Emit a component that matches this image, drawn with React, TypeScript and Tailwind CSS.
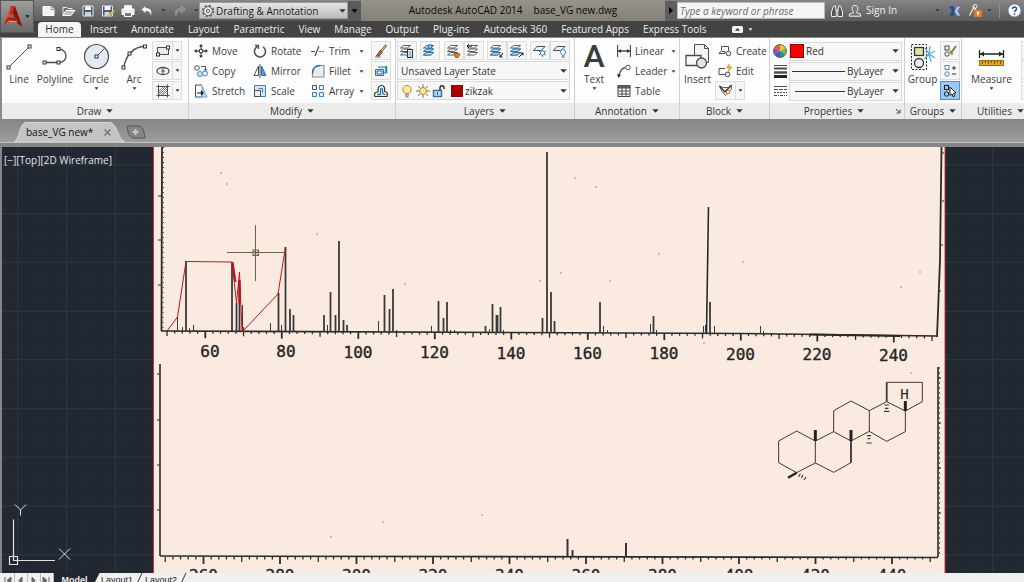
import React from "react";

type IconProps = { w?: number; h?: number; className?: string; children: React.ReactNode };

function Ico({ w = 16, h = 16, className = "", children }: IconProps) {
  return (
    <svg
      width={w}
      height={h}
      viewBox={`0 0 ${w} ${h}`}
      className={`shrink-0 ${className}`}
      fill="none"
      stroke="#4a4d52"
      strokeWidth="1"
      aria-hidden="true"
    >
      {children}
    </svg>
  );
}

function Caret({ className = "text-[#333]", small = false }: { className?: string; small?: boolean }) {
  return small ? (
    <svg width="5" height="3" viewBox="0 0 5 3" className={`shrink-0 ${className}`} aria-hidden="true">
      <path d="M0.5 0.3h4L2.5 2.8z" fill="currentColor" />
    </svg>
  ) : (
    <svg width="7" height="4" viewBox="0 0 7 4" className={`shrink-0 ${className}`} aria-hidden="true">
      <path d="M0.3 0.2h6.4L3.5 3.8z" fill="currentColor" />
    </svg>
  );
}

/* ---------- Quick access icons ---------- */

const quickIcons: { name: string; icon: React.ReactNode }[] = [
  { name: "New", icon: <Ico><path d="M2 3.5h8l3 3v6H2z" fill="#f3f3f3" stroke="#fff" /><path d="M10 3.5v3h3" stroke="#999" /></Ico> },
  { name: "Open", icon: <Ico><path d="M2 12.5v-8h4l1 1h4v2" stroke="#e8e8e8" /><path d="M2 12.5l3-5h9l-4 5z" fill="#b9c0c8" stroke="#fff" /></Ico> },
  { name: "Save", icon: <Ico><path d="M3 3h10v10H3z" fill="#4a5a78" stroke="#dfe5ee" /><path d="M5 3h6v4H5z" fill="#f4f4f4" stroke="none" /><path d="M5 9h6v4H5z" fill="#cfd5dd" stroke="none" /></Ico> },
  { name: "Save as", icon: <Ico><path d="M2.5 3h10v10h-10z" fill="#4a5a78" stroke="#dfe5ee" /><path d="M4.500 3h6v4h-6z" fill="#f4f4f4" stroke="none" /><path d="M4.500 9h5v4h-5z" fill="#cfd5dd" stroke="none" /><path d="M8 13l6-5" stroke="#e9b64a" strokeWidth="2.200" /></Ico> },
  { name: "Plot", icon: <Ico><path d="M4.500 6V2.500h7V6" fill="#fff" stroke="#eee" /><path d="M2 6h12v5.500H2z" fill="#e9e9e9" stroke="#fff" /><path d="M4.500 9.500h7v4h-7z" fill="#777" stroke="#fff" /></Ico> },
  { name: "Undo", icon: <Ico><path d="M6.500 3L2.500 6.500l4 3.500V8c3-.5 4.500.5 5.500 4.500 1.500-5-1-7.500-5.500-7.500z" fill="#f2f2f2" stroke="none" /></Ico> },
  { name: "Redo", icon: <Ico><path d="M9.500 3l4 3.500-4 3.500V8c-3-.5-4.500.5-5.500 4.500C2.500 7.500 5 5 9.500 5z" fill="#8c8c8c" stroke="#a4a4a4" strokeWidth=".6" /></Ico> },
];

function Gear() {
  return (
    <Ico w={14} h={14}>
      <circle cx="7" cy="7" r="5.200" stroke="#666" strokeWidth="2" strokeDasharray="2.300 1.780" />
      <circle cx="7" cy="7" r="4.300" stroke="#666" fill="#f1f1f1" />
      <circle cx="7" cy="7" r="1.700" stroke="#666" fill="#d8d8d8" />
    </Ico>
  );
}

function TitleBar() {
  return (
    <div className="flex h-[21px] items-center bg-linear-to-b from-[#858585] to-[#5c5c5c]">
      <div className="flex w-[165px] shrink-0 items-center pl-[5px]">
        {quickIcons.map((q, i) => (
          <React.Fragment key={q.name}>
            <button type="button" aria-label={q.name} className="flex w-5 justify-center">
              {q.icon}
            </button>
            {i === 5 && <Caret small className="mx-1 text-[#333]" />}
          </React.Fragment>
        ))}
        <Caret small className="ml-1 text-[#333]" />
      </div>
      <div className="relative h-[17px] w-[149px] shrink-0">
        <select
          aria-label="Workspace"
          className="block h-full w-full appearance-none border border-[#9b9b9b] bg-linear-to-b from-[#e6e6e6] to-[#bcbcbc] pl-[16px] text-[10px] leading-[14px] text-[#1c1c1c]"
        >
          <option>Drafting &amp; Annotation</option>
        </select>
        <span className="pointer-events-none absolute inset-0 flex items-center justify-between pl-[2px] pr-[2px]">
          <Gear />
          <Caret />
        </span>
      </div>
      <button type="button" aria-label="Customize quick access" className="flex h-[19px] w-[13px] shrink-0 items-center justify-center bg-[#5a5a5a]">
        <Caret className="text-black" />
      </button>
      <div className="flex h-full min-w-0 flex-1 items-center justify-center gap-[11px] bg-linear-to-b from-[#96938b] to-[#858179] text-[10px] whitespace-pre text-[#080808]">
        <span>Autodesk AutoCAD 2014</span>
        <span>base_VG new.dwg</span>
      </div>
      <button type="button" aria-label="Expand search" className="flex h-[19px] w-[12px] shrink-0 items-center justify-center bg-[#5e5e5e]">
        <svg width="4" height="7" viewBox="0 0 4 7" aria-hidden="true"><path d="M0 0l4 3.500-4 3.500z" fill="#000" /></svg>
      </button>
      <input
        aria-label="Search"
        placeholder="Type a keyword or phrase"
        className="h-[17px] w-[148px] shrink-0 border border-[#bbb] bg-[#f4f4f4] px-[2px] text-[10px] italic placeholder:text-[#6d6d6d]"
      />
      <div className="flex w-[199px] shrink-0 items-center pl-[5px] text-[10px] text-[#f0f0f0]">
        <button type="button" aria-label="Find" className="mr-[4px]">
          <Ico w={14} h={14}><path d="M3.500 2h2v2l.7 1.500v7H1.500V8zM10.500 2h-2v2L7.800 5.500v7h4.700V8z" fill="#555" stroke="#eee" /><path d="M5.500 6h3" stroke="#eee" /></Ico>
        </button>
        <button type="button" className="flex items-center gap-[4px]">
          <Ico w={14} h={14}><path d="M7 1.500c4 0 3.200 5 1.700 6v1.200l4 1.500v2H1.300v-2l4-1.500V7.500C3.800 6.500 3 1.500 7 1.500z" fill="#777" stroke="#f2f2f2" /></Ico>
          Sign In
        </button>
        <Caret small className="ml-auto text-[#333]" />
        <button type="button" aria-label="Exchange apps" className="ml-[8px]">
          <Ico w={14} h={14}><path d="M1 2h4l3 4v2l-3 4H1l3-5z" fill="#2b4f86" stroke="none" /><path d="M13 2H9L6.500 6v2L9 12h4l-3-5z" fill="#a9c4ea" stroke="#2b4f86" strokeWidth=".5" /></Ico>
        </button>
        <button type="button" aria-label="Stay connected" className="ml-[6px] mr-[4px] flex">
          <Ico w={15} h={15}><path d="M1.500 12.500L6 4l3 5" stroke="#ececec" strokeWidth="1.200" /><circle cx="7" cy="3.500" r="2" stroke="#ececec" /><rect x="6" y="7" width="8" height="7" fill="#e0782b" stroke="none" /><circle cx="10" cy="9.700" r="1.300" fill="#fff" stroke="none" /><path d="M10 10v2.500" stroke="#fff" /></Ico>
        </button>
        <Caret small />
        <span className="ml-[7px] mr-[7px] h-[15px] w-px bg-[#8f8f8f]" />
        <button type="button" aria-label="Help" className="mr-[2px]">
          <Ico w={15} h={15}><circle cx="7.500" cy="7.500" r="6.500" fill="#fff" stroke="#6f87b5" /><path d="M5.500 6c0-3 4.200-2.500 4 0-.1 1.300-1.900 1.300-1.900 3M7.600 10.200v1.600" stroke="#2a4f96" strokeWidth="1.600" /></Ico>
        </button>
      </div>
    </div>
  );
}

const ribbonTabs = ["Insert", "Annotate", "Layout", "Parametric", "View", "Manage", "Output", "Plug-ins", "Autodesk 360", "Featured Apps", "Express Tools"];

function Header() {
  return (
    <header className="flex shrink-0 bg-[#434343]">
      <div className="w-[34px] shrink-0">
        <button type="button" aria-label="Application menu" className="flex h-[33px] w-full items-center border border-[#555] bg-linear-to-b from-[#9d9d9d] to-[#6b6b6b]">
          <svg width="24" height="26" viewBox="0 0 24 26" className="shrink-0" aria-hidden="true">
            <path d="M10 2h4l-2.500 9L9 15 3 20z" fill="#e24a35" />
            <path d="M14 2l7.500 21-6-4L11 9z" fill="#8c1109" />
            <path d="M10 2h4l-3 8-2 1z" fill="#c72a1b" />
            <path d="M2 21.500l5-8 8-.5 2.500 4L10 17.500z" fill="#b01a10" />
            <path d="M2 21.500l6-5 7.500.500L17 18.500l-9-.5z" fill="#f08070" />
            <path d="M11.500 8.500l2.300 5-4 .5z" fill="#6b6b6b" />
          </svg>
          <Caret small className="text-[#111]" />
        </button>
      </div>
      <div className="min-w-0 flex-1">
        <TitleBar />
        <nav className="flex h-[16px] items-end text-[10px] leading-4 text-[#ececec]">
          <button type="button" className="ml-[4px] mr-[9px] h-[15px] w-[43px] shrink-0 rounded-t-sm bg-[#f5f5f5] leading-[15px] text-[#2c2c2c]">Home</button>
          <div className="flex min-w-0 items-center gap-[14px]">
            {ribbonTabs.map((t) => (
              <button key={t} type="button" className="shrink-0 whitespace-nowrap">{t}</button>
            ))}
            <button type="button" aria-label="Minimize ribbon" className="ml-[11px] flex h-4 items-center gap-[5px]">
              <svg width="11" height="7" viewBox="0 0 11 7" aria-hidden="true"><rect width="11" height="7" rx="1.500" fill="#f2f2f2" /><path d="M3 4.800h5L5.500 2z" fill="#333" /></svg>
              <Caret small className="text-[#eee]" />
            </button>
          </div>
        </nav>
      </div>
    </header>
  );
}

/* ---------- Ribbon ---------- */

function Panel({ title, width, launcher, children }: { title: string; width: string; launcher?: boolean; children: React.ReactNode }) {
  return (
    <section className={`flex flex-col border-r border-[#cfcfcf] ${width}`}>
      <div className="h-[65px] bg-[#fdfdfd] pt-[3px]">{children}</div>
      <button type="button" className="flex h-[16px] items-center bg-[#ebebeb] px-[3px] text-[10px] leading-4 text-[#333]">
        <span className="flex flex-1 items-center justify-center gap-[5px]">
          {title}
          <Caret />
        </span>
        {launcher && (
          <svg width="6" height="6" viewBox="0 0 6 6" aria-hidden="true"><path d="M1 1l3.500 3.500M5 1.500V5H1.500" stroke="#444" fill="none" /></svg>
        )}
      </button>
    </section>
  );
}

function BigTool({ label, width, caret, children }: { label: string; width: string; caret?: boolean; children: React.ReactNode }) {
  return (
    <button type="button" className={`flex h-[60px] shrink-0 flex-col items-center text-[10px] leading-4 text-[#3c3c3c] ${width}`}>
      <span className="flex h-[30px] items-center">{children}</span>
      {label}
      {caret && <Caret small />}
    </button>
  );
}

function Tool({ label, icon, caret }: { label: string; icon: React.ReactNode; caret?: boolean }) {
  return (
    <button type="button" className="flex h-5 items-center gap-[4px] text-[10px] leading-4 text-[#3c3c3c]">
      {icon}
      {label}
      {caret && <Caret small className="mr-[7px] ml-auto" />}
    </button>
  );
}

function Boxed({ name, active, split, children }: { name: string; active?: boolean; split?: boolean; children: React.ReactNode }) {
  return (
    <button
      type="button"
      aria-label={name}
      className={`flex h-[19px] items-center justify-center border ${split ? "w-[30px]" : "w-[20px]"} ${active ? "border-[#4a8fd0] bg-[#9bc8f0]" : "border-[#dcdcdc] bg-[#f6f6f6]"}`}
    >
      <span className="flex flex-1 justify-center">{children}</span>
      {split && (
        <span className="flex h-full w-[9px] items-center justify-center border-l border-[#dcdcdc]">
          <Caret small />
        </span>
      )}
    </button>
  );
}

const node = (x: number, y: number) => <rect x={x - 1.5} y={y - 1.5} width="3" height="3" fill="#fff" stroke="#333" />;

function DrawPanel() {
  return (
    <Panel title="Draw" width="w-[187px] shrink-0">
      <div className="flex">
        <BigTool label="Line" width="w-[34px]">
          <Ico w={27} h={27}><path d="M2.500 24.500l21-21" />{node(2.5, 24.5)}{node(23.5, 3.5)}</Ico>
        </BigTool>
        <BigTool label="Polyline" width="w-[38px]">
          <Ico w={27} h={27}><path d="M2.500 19.500h14c10 0 10-13 0-13.500" strokeWidth="1.300" />{node(2.5, 19.5)}{node(16.5, 19.5)}{node(16.5, 6)}</Ico>
        </BigTool>
        <BigTool label="Circle" width="w-[44px]" caret>
          <Ico w={27} h={27}><circle cx="13.500" cy="13.500" r="12" fill="#e2eaf3" strokeWidth="1.200" /><path d="M13.500 13.500l8-8" />{node(13.5, 13.5)}</Ico>
        </BigTool>
        <BigTool label="Arc" width="w-[32px]" caret>
          <Ico w={27} h={27}><path d="M2.500 25C5 12 12 4 24.500 3" strokeWidth="1.300" />{node(2.5, 24.5)}{node(8.5, 10.5)}{node(24, 3.5)}</Ico>
        </BigTool>
        <div className="flex flex-col gap-px pl-[2px]">
          <Boxed name="Rectangle" split>
            <Ico><rect x="2.500" y="4.500" width="11" height="7" fill="#e6eaf0" />{node(3, 11.5)}{node(13, 4.5)}</Ico>
          </Boxed>
          <Boxed name="Ellipse" split>
            <Ico><ellipse cx="8" cy="8" rx="6" ry="3.500" strokeWidth="1.300" /><path d="M8 5v6M6 8h4" /></Ico>
          </Boxed>
          <Boxed name="Hatch" split>
            <Ico><path d="M3.500 1.500v13M12.500 1.500v13M1.500 3.500h13M1.500 12.500h13" /><path d="M4 8l4-4M4 12l8-8M8 12l4-4M4 10l6-6M6 12l6-6" strokeWidth=".7" /></Ico>
          </Boxed>
        </div>
      </div>
    </Panel>
  );
}

function ModifyPanel() {
  return (
    <Panel title="Modify" width="w-[207px] shrink-0">
      <div className="grid grid-cols-[59px_58px_60px_20px] grid-rows-[20px_20px_20px] pl-[5px]">
        <Tool label="Move" icon={<Ico w={14} h={14}><path d="M7 1v12M1 7h12" strokeWidth="1.300" /><path d="M7 0l2 2.500H5zM7 14l2-2.500H5zM0 7l2.500-2v4zM14 7l-2.500-2v4z" fill="#333" stroke="none" /><rect x="5.500" y="5.500" width="3" height="3" fill="#fff" /></Ico>} />
        <Tool label="Rotate" icon={<Ico w={14} h={14}><path d="M4.500 2.500a5.500 5.500 0 1 0 5.500.3" strokeWidth="1.500" /><path d="M2 1.500h3.500v3.500" strokeWidth="1.300" /></Ico>} />
        <Tool caret label="Trim" icon={<Ico w={14} h={14}><path d="M0 7.500h4M4 12l4-10" strokeWidth="1.200" /><path d="M8 7.500h6" stroke="#2e86c9" strokeDasharray="2 1" /></Ico>} />
        <Boxed name="Erase"><Ico><path d="M13.500 2l-6 7" stroke="#8a6a3a" strokeWidth="2.500" /><path d="M13.500 2l-6 7" stroke="#e8c98c" strokeWidth=".8" /><path d="M7 7.500l2.500 2L6 13H3.500z" fill="#c07850" stroke="#6c3a23" /><path d="M2 14h6" stroke="#8c6a50" /></Ico></Boxed>
        <Tool label="Copy" icon={<Ico w={14} h={14}><circle cx="3" cy="4" r="2.300" /><path d="M7 2.500h4.500v4" /><circle cx="6" cy="10" r="2.500" stroke="#2e86c9" fill="#cfe6f7" /><circle cx="11" cy="9.500" r="2.500" stroke="#2e86c9" fill="#fff" /><path d="M9.800 5l1.700 2 1.700-2" stroke="#2e86c9" /></Ico>} />
        <Tool label="Mirror" icon={<Ico w={14} h={14}><path d="M5.500 2v9.500H1z" /><path d="M8.500 2v9.500H13z" fill="#5b9bd0" stroke="#2e6fa8" /><path d="M7 0v14" /></Ico>} />
        <Tool caret label="Fillet" icon={<Ico w={14} h={14}><path d="M1.500 13V9.500c0-5 3-8 8-8H13V13z" fill="#e9eef4" stroke="#8a9099" strokeWidth="1.200" /><path d="M1.500 9.500c0-5 3-8 8-8" stroke="#2e6fa8" strokeWidth="1.300" /></Ico>} />
        <Boxed name="Explode"><Ico><path d="M2.500 6.500h8v6h-8zM5 4h8v6h-2.500" stroke="#2479b5" fill="#cfe6f7" /><path d="M4 8h5v3H4z" fill="#e9f5ff" stroke="#2479b5" /><path d="M13.500 3v7" stroke="#2479b5" strokeWidth="1.500" /></Ico></Boxed>
        <Tool label="Stretch" icon={<Ico w={14} h={14}><path d="M8 1H1.500v12H8M1.500 1v12" /><path d="M8 2l5 11H8z" fill="#bcdcf3" stroke="#6aa6d4" /><path d="M3 9h6M7 7l2 2-2 2" stroke="#111" strokeWidth="1.200" /></Ico>} />
        <Tool label="Scale" icon={<Ico w={14} h={14}><path d="M1.500 1.500h11v11h-11z" fill="#d3e8f8" stroke="#2e86c9" /><path d="M1.500 6.500h6v6h-6z" fill="#eee" /><path d="M5.500 4.500h4v4" stroke="#2e86c9" /></Ico>} />
        <Tool caret label="Array" icon={<Ico w={14} h={14}><path d="M1.500 1.500h4v4h-4z" /><path d="M8.500 1.500h4v4h-4zM1.500 8.500h4v4h-4zM8.500 8.500h4v4h-4z" stroke="#2e86c9" fill="#e6f3fc" /></Ico>} />
        <Boxed name="Offset"><Ico><path d="M2 13.500c-1.500-3 0-4.500 3-4.500 0-4 .5-6.500 3.500-6.500s3.500 2.500 3 6c2.500 0 3.500 2 2.500 5z" stroke="#333" strokeWidth="1.200" /><path d="M4 11.500h3.500V7c0-2 2-2 2 0v2c0 1.500 1 2.500 3 2.500" stroke="#2479b5" strokeWidth="1.300" /></Ico></Boxed>
      </div>
    </Panel>
  );
}

function Sheets({ accent }: { accent?: React.ReactNode }) {
  return (
    <Ico>
      <path d="M4.500 2.500h7l-3 2.500h-7zM4.500 6h7l-3 2.500h-7zM4.500 9.500h7l-3 2.500h-7z" fill="#fff" strokeWidth=".9" />
      {accent}
    </Ico>
  );
}

const blueSheets = <path d="M4.500 6h7l-3 2.500h-7zM4.500 9.500h7l-3 2.500h-7z" fill="#b7daf4" stroke="#236fa8" strokeWidth=".9" />;

function LayersPanel() {
  return (
    <Panel title="Layers" width="w-[179px] shrink-0">
      <div className="flex h-5 justify-between pr-[4px] pl-px">
        <Boxed name="Layer properties"><Sheets accent={<><rect x="8.500" y="6.500" width="5" height="8" fill="#fff" stroke="#333" /><path d="M9.500 9h3M9.500 11h3M9.500 13h3" stroke="#2e86c9" /></>} /></Boxed>
        <Boxed name="Make current"><Sheets accent={<>{blueSheets}<circle cx="8" cy="3.500" r="2" fill="#8cc1ea" stroke="#236fa8" /></>} /></Boxed>
        <div className="flex">
          <Boxed name="Match layer"><Sheets accent={<path d="M8 10l6 1-2 3.500H9.500z" fill="#d6843a" stroke="#a35414" />} /></Boxed>
          <Boxed name="Previous layer"><Sheets accent={<path d="M1 3h5M3 1L1 3l2 2" stroke="#111" />} /></Boxed>
        </div>
        <div className="flex">
          <Boxed name="Isolate"><Sheets accent={<>{blueSheets}<path d="M14 10l-3 4M11 11.500V14h2.500" stroke="#111" /></>} /></Boxed>
          <Boxed name="Unisolate"><Sheets accent={<>{blueSheets}<path d="M10 14l4-4M11.500 10H14v2.500" stroke="#111" /></>} /></Boxed>
        </div>
        <div className="flex">
          <Boxed name="Freeze"><Ico><path d="M5 3.500h8l-4 4H1.500z" /><path d="M10.500 6v8M7 8l7 4M14 8l-7 4" stroke="#2e86c9" /><circle cx="10.500" cy="10" r="2.200" fill="#fff" stroke="#2e86c9" /></Ico></Boxed>
          <Boxed name="Layer off"><Ico><path d="M5 3.500h8l-4 4H1.500z" /><path d="M10.500 12.500c-3.500-4-1.500-6 .5-6s4 2 1 6z" fill="#e8f3fb" stroke="#2e86c9" /><path d="M10 14h2.500" stroke="#333" /></Ico></Boxed>
        </div>
      </div>
      <div className="flex flex-col gap-px pr-[4px] pl-px">
        <div className="relative">
          <select aria-label="Layer state" className="block h-[19px] w-full appearance-none border border-[#d9d9d9] bg-[#f7f7f7] pl-[3px] text-[10px] leading-4 text-[#333]">
            <option>Unsaved Layer State</option>
          </select>
          <span className="pointer-events-none absolute inset-y-0 right-[3px] flex items-center"><Caret /></span>
        </div>
        <div className="relative">
          <select aria-label="Layer" className="block h-[19px] w-full appearance-none border border-[#d9d9d9] bg-[#f7f7f7] pl-[67px] text-[10px] leading-4 text-[#333]">
            <option>zikzak</option>
          </select>
          <span className="pointer-events-none absolute inset-0 flex items-center gap-[2px] pr-[3px] pl-[3px]">
            <Ico w={14} h={14}><path d="M5 9.500C1 6 3 1.500 7 1.500s6 4.500 2 8z" fill="#fbe9a4" stroke="#b58e30" /><path d="M5 11h4M5.500 12.800h3" stroke="#666" /></Ico>
            <Ico w={14} h={14}><path d="M7 0v14M0 7h14M2 2l10 10M12 2L2 12" stroke="#777" /><circle cx="7" cy="7" r="3.500" fill="#fbe9a4" stroke="#b58e30" /></Ico>
            <Ico w={14} h={14}><path d="M8 7V4c0-3 4-3 4 0v1" stroke="#333" strokeWidth="1.500" /><rect x="1.500" y="6.500" width="8" height="6" fill="#b8dcf5" stroke="#2e6fa8" strokeWidth="1.400" /><path d="M5.500 8.500v2" stroke="#111" /></Ico>
            <span className="ml-[3px] size-[12px] border border-[#7a1010] bg-[#a80000]" />
            <Caret className="ml-auto text-[#333]" />
          </span>
        </div>
      </div>
    </Panel>
  );
}

function AnnotationPanel() {
  return (
    <Panel title="Annotation" width="w-[105px] shrink-0">
      <div className="flex">
        <BigTool label="Text" width="w-[38px]" caret>
          <span className="font-['Roboto'] text-[32px] leading-[30px] font-medium">A</span>
        </BigTool>
        <div className="flex flex-1 flex-col pl-[4px] [&>button]:w-full">
          <Tool caret label="Linear" icon={<Ico w={14} h={14}><path d="M.5 1v12M13.500 1v12M1 7h12" strokeWidth="1.300" /><path d="M1 7l3-2v4zM13 7l-3-2v4z" fill="#333" stroke="none" /></Ico>} />
          <Tool caret label="Leader" icon={<Ico w={14} h={14}><path d="M1.500 13C3 8 4 4.500 8 3.500" strokeWidth="1.300" /><circle cx="11" cy="3.500" r="2.300" /><path d="M0 10l1.500 4L4 11z" fill="#333" stroke="none" /></Ico>} />
          <Tool label="Table" icon={<Ico w={14} h={14}><path d="M1 1.500h12v11H1z" fill="#fff" /><path d="M1 1.500h12v2.500H1z" fill="#666" /><path d="M1 7h12M1 10h12M5 4v9M9 4v9" /></Ico>} />
        </div>
      </div>
    </Panel>
  );
}

function BlockPanel() {
  return (
    <Panel title="Block" width="w-[90px] shrink-0">
      <div className="flex">
        <BigTool label="Insert" width="w-[35px]">
          <Ico w={27} h={27}><path d="M10.500 1.500h10l4 4v14h-14z" fill="#f3f3f3" /><path d="M20.500 1.500v4h4" /><path d="M2 12.500h15v10H2z" fill="#f7f7f7" strokeWidth="1.300" /><circle cx="17.500" cy="20" r="5" fill="#e4e4e4" strokeWidth="1.300" /></Ico>
        </BigTool>
        <div className="flex flex-col items-start">
          <div className="pl-[3px]">
            <Tool label="Create" icon={<Ico w={14} h={14}><path d="M3.500 2.500h7v5M1 9.500h6V7.500l-3 0" /><path d="M3.500 2.500v4L1 9.500" /><circle cx="10.500" cy="9.500" r="2.300" fill="#eee" /></Ico>} />
            <Tool label="Edit" icon={<Ico w={14} h={14}><path d="M1 4.500h6M1 4.500v6h7" /><circle cx="9.500" cy="10.500" r="2.300" fill="#eee" /><path d="M11.500 0l-3 4h3l-1.500 4 4-5h-3z" fill="#f0b429" stroke="#c98a10" strokeWidth=".6" /></Ico>} />
          </div>
          <Boxed name="Edit attributes" split><Ico><path d="M1.500 3l3 1.500h6l3-2.500v4l-6 6.500-3.500-4z" fill="#f7f1e4" strokeWidth=".9" /><path d="M1.500 3l5.500 6 6-6.500" stroke="#333" strokeWidth="1.300" /><circle cx="10" cy="9" r="1.700" stroke="#c9762a" fill="#fff" /></Ico></Boxed>
        </div>
      </div>
    </Panel>
  );
}

function PropRow({ icon, label, value, swatch, start }: { icon: React.ReactNode; label: string; value: string; swatch?: boolean; start?: string }) {
  return (
    <div className="flex h-5 items-center gap-[2px]">
      {icon}
      <div className="relative h-[19px] flex-1">
        <select
          aria-label={label}
          className={`block h-full w-full appearance-none border border-[#d9d9d9] bg-[#f7f7f7] text-[10px] leading-4 text-[#333] ${swatch ? "pl-[16px]" : "pl-[57px]"}`}
        >
          <option>{value}</option>
        </select>
        <span className="pointer-events-none absolute inset-0 flex items-center justify-between pr-[3px]">
          {swatch ? <span className="ml-px size-[14px] border border-[#701010] bg-[#fb0000]" /> : <span className={`mr-auto h-px bg-[#333] ${start}`} />}
          <Caret />
        </span>
      </div>
    </div>
  );
}

function PropertiesPanel() {
  return (
    <Panel title="Properties" width="w-[135px] shrink-0" launcher>
      <div className="pr-[2px] pl-[3px]">
        <PropRow
          swatch
          label="Color"
          value="Red"
          icon={<Ico w={14} h={14}><g stroke="none"><path d="M7 7V.5A6.500 6.500 0 0 1 12.600 3.700z" fill="#e8c93a" /><path d="M7 7l5.600-3.300a6.500 6.500 0 0 1 0 6.600z" fill="#7cb845" /><path d="M7 7l5.600 3.300A6.500 6.500 0 0 1 7 13.500z" fill="#2c8f8a" /><path d="M7 7v6.500a6.500 6.500 0 0 1-5.600-3.200z" fill="#3a5fc0" /><path d="M7 7l-5.600 3.300a6.500 6.500 0 0 1 0-6.600z" fill="#a848a0" /><path d="M7 7L1.400 3.700A6.500 6.500 0 0 1 7 .5z" fill="#e0602e" /></g><circle cx="7" cy="7" r="6.500" stroke="#666" /></Ico>}
        />
        <PropRow label="Lineweight" value="ByLayer" start="ml-[3px] w-[53px]" icon={<Ico w={14} h={14}><path d="M1 1.500h13" /><path d="M1 4.500h13" strokeWidth="2" /><path d="M1 8.500h13" strokeWidth="2.500" /><path d="M1 12.500h13" strokeWidth="3" stroke="#222" /></Ico>} />
        <PropRow label="Linetype" value="ByLayer" start="ml-[6px] w-[50px]" icon={<Ico w={14} h={14}><path d="M1 2.500h13" /><path d="M1 5.500h13" strokeDasharray="4 1" /><path d="M1 8.500h13" strokeDasharray="2 1" /><path d="M1 11.500h13" strokeDasharray="3 1 1 1" /></Ico>} />
      </div>
    </Panel>
  );
}

function GroupsPanel() {
  return (
    <Panel title="Groups" width="w-[57px] shrink-0">
      <div className="flex">
        <BigTool label="Group" width="w-[35px]">
          <Ico w={27} h={27}><rect x="2.500" y="1.500" width="15" height="25" stroke="#222" strokeDasharray="2 1.500" /><rect x="5.500" y="4.500" width="9" height="8" fill="#dfe3a0" stroke="#333" strokeWidth="1.300" /><circle cx="10" cy="20" r="4.500" fill="#eee" stroke="#333" strokeWidth="1.300" /><path d="M20 11l6-3M20 11l6 4M20 11l1-8M20 11l2 8M20 11l-5 5M20 11l-4-6" stroke="#5aa9e0" strokeWidth="1.300" /></Ico>
        </BigTool>
        <div className="flex flex-col gap-px">
          <Boxed name="Group edit"><Ico><rect x="3" y="3" width="4" height="4" /><circle cx="5" cy="11" r="2.200" /><path d="M14 3l-5 7M8 8l2.500 3.500" stroke="#8c8228" strokeWidth="2" /></Ico></Boxed>
          <Boxed name="Ungroup"><Ico><g stroke="#5f87ad"><rect x="3" y="2.500" width="4" height="4" /><circle cx="5" cy="11" r="2.200" /></g><path d="M10 5h4M12 3v4M10 11h4" stroke="#333" /></Ico></Boxed>
          <Boxed name="Group selection" active><Ico><rect x="2.500" y="2.500" width="4" height="4" stroke="#222" /><circle cx="4.500" cy="11" r="2.200" stroke="#222" /><path d="M8 4l6 6-2.500.3 1.200 3-1.500.6-1.200-3L8 12.500z" fill="#fff" stroke="#222" /></Ico></Boxed>
        </div>
      </div>
    </Panel>
  );
}

function UtilitiesPanel() {
  return (
    <Panel title="Utilities" width="min-w-[78px] flex-1">
      <div className="flex">
        <BigTool label="Measure" width="w-[59px]" caret>
          <Ico w={27} h={27}><path d="M1.500 7v8M25.500 7v8M2 11h23" stroke="#222" strokeWidth="1.300" /><path d="M2 11l4-2.500v5zM25 11l-4-2.500v5z" fill="#222" stroke="none" /><rect x="1.500" y="17.500" width="24" height="5" fill="#e2a52c" stroke="#9a6c12" /><path d="M4.500 18v3M7.500 18v2M10.500 18v3M13.500 18v2M16.500 18v3M19.500 18v2M22.500 18v3" stroke="#6b4a0a" /></Ico>
        </BigTool>
        <div className="flex flex-col gap-px">
          <Boxed name="Select all">{null}</Boxed>
          <Boxed name="Quick select">{null}</Boxed>
          <Boxed name="Calculator">{null}</Boxed>
        </div>
      </div>
    </Panel>
  );
}

function FileTabs() {
  return (
    <div className="flex h-[28px] shrink-0 flex-col bg-linear-to-b from-[#858585] to-[#a2a2a2]">
      <div className="flex flex-1 items-end pl-[14px] text-[10px]">
        <div className="relative flex h-[20px] w-[112px] items-center">
          <svg className="absolute inset-0" width="112" height="20" viewBox="0 0 112 20" aria-hidden="true">
            <path d="M0 20C6 18 5 1 12 .5h84c7 .5 8 17.500 15 19.500z" fill="#c4c4c4" stroke="#d8d8d8" />
          </svg>
          <button type="button" className="relative ml-[12px] text-[#111]">base_VG new*</button>
          <button type="button" aria-label="Close file" className="relative mr-[15px] ml-auto">
            <svg width="7" height="7" viewBox="0 0 7 7" aria-hidden="true"><path d="M.5.5l6 6M6.500.5l-6 6" stroke="#777" strokeWidth="1.500" /></svg>
          </button>
        </div>
        <button type="button" aria-label="New file" className="mb-[3px]">
          <svg width="20" height="14" viewBox="0 0 20 14" aria-hidden="true"><path d="M1 1h11c4 0 6 3 7 12H8C4 13 2 9 1 1z" fill="#858585" stroke="#555" /><path d="M9.500 4v6M6.500 7h6" stroke="#c9c9c9" strokeWidth="2" /></svg>
        </button>
      </div>
      <div className="h-px bg-[#c4c4c4]" />
      <div className="h-[4px] bg-[#868686]" />
    </div>
  );
}

/* ---------- Drawing area ---------- */

type Peak = [x: number, top: number, width?: number];

const upperPeaks: Peak[] = [
  [177.5, 317], [182.5, 327], [186, 261, 2], [189.5, 328], [193.5, 325], [232, 262, 2], [236.5, 303, 2], [239.5, 280, 2], [242.5, 305],
  [270.5, 323], [278.5, 293, 2], [281.5, 325], [285.5, 247, 2], [290, 309, 2], [293.5, 315, 2], [324, 315, 2], [327.5, 325],
  [330.5, 292, 2], [335.5, 315, 2], [339, 241, 2], [343.5, 320, 2], [347, 325, 2], [378.5, 321], [384.5, 295, 2], [389.5, 309, 2],
  [393, 289, 2], [396.5, 330], [431.5, 326], [438.5, 301, 2], [443.5, 318, 2], [447, 302, 2], [450.5, 330], [454.5, 330], [485.5, 326, 2],
  [489.5, 329], [492.5, 304, 2], [497, 315, 3], [500.5, 307, 2], [503.5, 330], [542.5, 318, 2], [547, 152, 2], [551, 292, 2],
  [554.5, 321, 2], [600, 302, 2], [603.5, 326], [607.5, 330], [650.5, 324], [653.5, 316, 2], [656.5, 330], [703.5, 326], [705.5, 325],
  [710, 302, 2], [714.5, 326], [760.5, 326], [763.5, 331],
];

const lowerPeaks: Peak[] = [[567.5, 539, 2], [572.5, 550, 2], [626, 543, 2]];

const baseY = (x: number) => (x < 740 ? 331 + ((x - 161) * 2.5) / 579 : 333.5 + ((x - 740) * 2.5) / 197);

const specks: [number, number][] = [
  [227, 184], [221, 173], [317, 234], [561, 273], [575, 178], [596, 187], [659, 254], [610, 281], [920, 272], [901, 287], [405, 284],
  [331, 537], [383, 522], [482, 515], [704, 343], [743, 262], [911, 373], [540, 281],
];

function Axis({ y, origin, start }: { y: (x: number) => number; origin: number; start: number }) {
  const ticks: React.ReactNode[] = [];
  for (let i = start; i <= 195; i++) {
    const x = origin + i * 3.825;
    if (x > 937) break;
    const ten = i % 20 === 0;
    const five = i % 10 === 0;
    if (!five && i % 2 !== 0) continue;
    const len = ten ? 7 : five ? 5 : 2.5;
    ticks.push(<path key={i} d={`M${x} ${y(x)}v${len}`} strokeWidth={ten ? 1.8 : 1.3} />);
  }
  return <g stroke="#2c2c2c">{ticks}</g>;
}

function Drawing() {
  return (
    <svg className="block h-full w-full" viewBox="2 147 1022 426" preserveAspectRatio="xMidYMid slice" role="img" aria-label="Mass spectrum drawing">
      <defs>
        <pattern id="minor" x="17.500" y="213.500" width="4.875" height="4.875" patternUnits="userSpaceOnUse">
          <path d="M0 .5h4.875M.5 0v4.875" stroke="#242b35" strokeWidth=".8" />
        </pattern>
        <pattern id="major" x="17.250" y="213" width="48.750" height="48.750" patternUnits="userSpaceOnUse">
          <path d="M0 .5h48.750M.5 0v48.750" stroke="#2d3641" />
        </pattern>
      </defs>
      <rect y="147" width="1024" height="426" fill="#202730" />
      <rect y="147" width="1024" height="426" fill="url(#minor)" />
      <rect y="147" width="1024" height="426" fill="url(#major)" />
      <rect x="154" y="147" width="791" height="426" fill="#fbeae0" />
      <path d="M153.500 147v426M945 147v426" stroke="#c8353a" />
      {specks.map(([x, y]) => <circle key={`${x}-${y}`} cx={x} cy={y} r=".8" fill="#8e7f7a" />)}

      <g stroke="#2a2a2a" fill="none">
        <path d="M162 147L161.500 331M941.500 147L940 260 937 337" strokeWidth="1.800" />
        <path d="M163.500 147L163 331" strokeWidth="1" strokeDasharray="1 4" />
        <path d="M158 196h4M158 240h4M158 285h4M942 201h2M941 245h2M939 291h2M942 153h2" />
        <path d="M161 331L740 333.500 937 336" strokeWidth="1.600" />
        <path d="M810 334.500L900 336" strokeWidth="2.200" />
        <path d="M160 364L160 556M938 367L938 557" strokeWidth="1.600" />
        <path d="M939.500 367v190" strokeDasharray="2 3" strokeWidth=".7" />
        <path d="M160 556L938 557.500" strokeWidth="1.600" />
        <path d="M157 374h3M157 420h3M157 465h3M157 510h3M938 378h3M938 423h3M938 468h3M938 513h3" />
        <path d="M706.500 333L708.500 207" strokeWidth="1.600" />
      </g>
      <Axis y={baseY} origin={205.3} start={-10} />
      <Axis y={() => 557} origin={203.5} start={-10} />
      {upperPeaks.map(([x, top, w = 1]) => <path key={x} d={`M${x} ${top}V${baseY(x)}`} stroke="#3a3a3a" strokeWidth={w > 1 ? w - 0.2 : w} />)}
      {lowerPeaks.map(([x, top, w = 1]) => <path key={x} d={`M${x} ${top}V556.500`} stroke="#353535" strokeWidth={w} />)}

      <g fontFamily="'DejaVu Sans Mono', monospace" fontSize="16" fill="#262626" stroke="#262626" strokeWidth=".4" textAnchor="middle">
        {[60, 80, 100, 120, 140, 160, 180, 200, 220, 240].map((v, i) => (
          <text key={v} x={i < 2 ? 210 + i * 76 : 358 + (i - 2) * 76.5} y={357 + i * 0.4}>{v}</text>
        ))}
        {[260, 280, 300, 320, 340, 360, 380, 400, 420, 440].map((v, i) => (
          <text key={v} x={203.5 + i * 76.5} y={581}>{v}</text>
        ))}
      </g>

      <path d="M167 331l10.500-14L186 261.500l46 .5 4.500 41 3-31 2.500 59h1l35-37 7.500-47" fill="none" stroke="#c2141b" />
      <path d="M239.500 281v22M232.500 262l3 20M243 327v5" stroke="#b5121b" strokeWidth="2" />

      <g stroke="#65654f" fill="none">
        <path d="M227 252.500h59M255.500 225v56" />
        <rect x="253" y="250" width="5.500" height="5.500" />
        <path d="M253 250l5.500 5.500M258.500 250l-5.500 5.500" strokeWidth=".6" />
      </g>

      <g transform="translate(740 360) scale(.33333)" fill="none" stroke="#3c3735" strokeWidth="3">
        <path d="M116 243l54-30 56 30v66l-56 29-54-30zM226 243l55-28 52 28v65l-52 29-55-28M281 215v-63l52-29 55 29v62l-55 29M388 152l52-27 56 28v62l-56 29-52-30M440 125V67h107v58l-51 28" />
        <path d="M226 210v33M333 210v33M496 123v30" strokeWidth="9" stroke="#222" />
        <path d="M333 243v65M440 67v58" strokeWidth="5" />
        <path d="M170 338l-26 15" strokeWidth="7" stroke="#222" />
        <path d="M176 350l5-9M184 354l5-9M192 360l6-9M433 135h14M435 145h10M432 154h16M381 227h12M383 236h8M379 249h16" strokeWidth="3.500" />
      </g>
      <text x="904.500" y="398.500" textAnchor="middle" fontFamily="'DejaVu Sans Mono', monospace" fontSize="14" fill="#262626">H</text>
    </svg>
  );
}

function Canvas() {
  return (
    <main className="relative min-h-0 flex-1 border-l-2 border-[#858585] bg-[#202730]">
      <Drawing />
      <div className="absolute top-[6px] left-[2px] flex text-[10px] leading-[14px] text-[#e2e5e9]">
        <button type="button">[−]</button>
        <button type="button">[Top]</button>
        <button type="button">[2D Wireframe]</button>
      </div>
      <svg className="absolute bottom-0 left-0" width="80" height="74" viewBox="2 499 80 74" fill="none" stroke="#dcdfe3" aria-label="Coordinate axes" role="img">
        <path d="M13.500 519.500v41h41.500M9.500 556.500h8v8h-8z" strokeWidth="1.200" />
        <path d="M15 504.500l5.500 5.500 5.500-5.500M20.500 510v5.500M59 548.500l11 11M70 548.500l-11 11" />
      </svg>
    </main>
  );
}

const pagers: [string, string][] = [
  ["First", "M3 3v7M9 3L5 6.500 9 10z"],
  ["Previous", "M7 3L4 6.500 7 10z"],
  ["Next", "M4 3l3 3.500L4 10z"],
  ["Last", "M2 3l4 3.500L2 10zM8 3v7"],
];

function Slant() {
  return (
    <svg width="10" height="17" viewBox="0 0 10 17" className="shrink-0" aria-hidden="true">
      <path d="M9 0L1 17" stroke="#333" fill="none" />
    </svg>
  );
}

function LayoutTabs() {
  return (
    <footer className="flex h-[9px] shrink-0 items-start overflow-hidden bg-[#f0f0f0] font-['Liberation_Sans'] text-[9px] leading-[15px] text-[#222]">
      <div className="flex pl-[2px]">
        {pagers.map(([name, d]) => (
          <button key={name} type="button" aria-label={name} className="h-[14px] w-[13px] border-r border-[#bbb]">
            <svg width="11" height="12" viewBox="0 0 11 12" aria-hidden="true"><path d={d} fill="#666" stroke="#666" strokeWidth="1" /></svg>
          </button>
        ))}
      </div>
      <button type="button" className="h-[15px] w-[38px] bg-[#202730] pl-[3px] font-bold text-[#eee]">Model</button>
      <svg width="8" height="15" viewBox="0 0 8 15" className="mr-px shrink-0" aria-hidden="true"><path d="M0 0h7.500L0 15z" fill="#202730" /></svg>
      <button type="button">Layout1</button>
      <Slant />
      <button type="button" className="ml-[2px]">Layout2</button>
      <Slant />
    </footer>
  );
}

export default function App() {
  return (
    <div className="flex h-screen flex-col overflow-hidden bg-[#434343] font-['Open_Sans','Noto_Sans',sans-serif]">
      <Header />
      <div className="flex shrink-0 overflow-hidden border-t border-l-2 border-[#8a8a8a] whitespace-nowrap">
        <DrawPanel />
        <ModifyPanel />
        <LayersPanel />
        <AnnotationPanel />
        <BlockPanel />
        <PropertiesPanel />
        <GroupsPanel />
        <UtilitiesPanel />
      </div>
      <FileTabs />
      <Canvas />
      <LayoutTabs />
    </div>
  );
}
